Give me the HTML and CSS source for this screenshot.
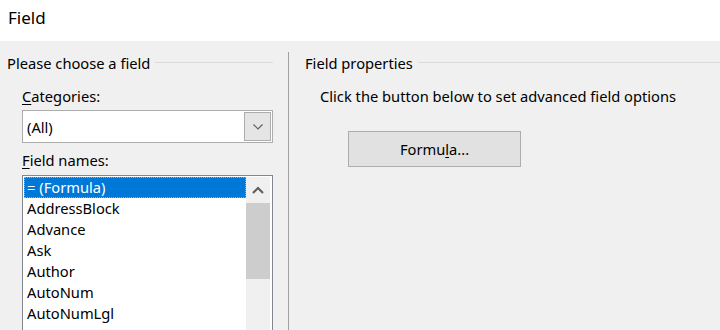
FILE: index.html
```html
<!DOCTYPE html>
<html lang="en">
<head>
  <meta charset="UTF-8" />
  <title>Field</title>
  <link rel="stylesheet" href="styles.css">
</head>
<body>

<!-- Title bar -->
<div class="titlebar">Field</div>

<div class="dialog">
  <!-- Left: choose a field -->
  <div class="pane pane-left">
    <div class="legend"><span>Please choose a field</span></div>
    <div class="pane-body">
      <div class="label"><u>C</u>ategories:</div>
      <div class="combo">
        <div class="combo-text">(All)</div>
        <div class="combo-btn">
          <svg width="10" height="6" viewBox="0 0 10 6"><path d="M0.5 0.5 L5 5 L9.5 0.5" fill="none" stroke="#606060" stroke-width="1.2"/></svg>
        </div>
      </div>

      <div class="label label-names"><u>F</u>ield names:</div>
      <div class="listbox">
        <div class="items">
          <div class="item selected">= (Formula)</div>
          <div class="item">AddressBlock</div>
          <div class="item">Advance</div>
          <div class="item">Ask</div>
          <div class="item">Author</div>
          <div class="item">AutoNum</div>
          <div class="item">AutoNumLgl</div>
        </div>
        <div class="scrollbar">
          <div class="scroll-up">
            <svg width="12" height="8" viewBox="0 0 12 8"><path d="M1 7 L6 2 L11 7" fill="none" stroke="#606060" stroke-width="2.2"/></svg>
          </div>
          <div class="thumb"></div>
        </div>
      </div>
    </div>
  </div>

  <div class="divider"></div>

  <!-- Right: field properties -->
  <div class="pane pane-right">
    <div class="legend"><span>Field properties</span></div>
    <div class="hint">Click the button below to set advanced field options</div>
    <button class="btn">Formu<u>l</u>a...</button>
  </div>
</div>

</body>
</html>
```

FILE: styles.css
```css
* {
  margin: 0;
  padding: 0;
  box-sizing: border-box;
}
html, body {
  height: 100%;
  overflow: hidden;
}
body {
  font-family: 'Noto Sans', 'Segoe UI', sans-serif;
  font-size: 14.7px;
  color: #000;
  background: #f0f0f0;
}
u {
  text-decoration-thickness: 1px;
  text-underline-offset: 2px;
}

.titlebar {
  height: 41px;
  background: #fff;
  padding: 6px 0 0 8px;
  font-size: 17px;
  line-height: 24px;
}

.dialog {
  display: flex;
  height: 289px;
  padding-top: 11px;
  overflow: hidden;
}

/* group legend with line after */
.legend {
  display: flex;
  align-items: center;
  height: 22px;
  line-height: 22px;
}
.legend::after {
  content: "";
  flex: 1;
  height: 1px;
  background: #dcdcdc;
  margin-left: 5px;
  margin-top: -2px;
}

.pane-left {
  width: 266px;
  margin-left: 7px;
  margin-right: 15px;
}
.pane-body {
  padding-left: 15px;
}
.label {
  margin-top: 11px;
  line-height: 22px;
  height: 22px;
}
.label-names {
  margin-top: 6px;
}

.combo {
  display: flex;
  height: 33px;
  margin-top: 3px;
  background: #fff;
  border: 1px solid #adadad;
  padding: 1px 1px 1px 4px;
}
.combo-text {
  flex: 1;
  line-height: 31px;
}
.combo-btn {
  width: 27px;
  background: #e5e5e5;
  border: 1px solid #adadad;
  display: flex;
  align-items: center;
  justify-content: center;
}

.listbox {
  display: flex;
  margin-top: 4px;
  height: 200px;
  background: #fff;
  border: 1px solid #828790;
  padding: 1px;
}
.items {
  flex: 1;
}
.item {
  height: 21px;
  line-height: 21px;
  padding-left: 3px;
}
.item.selected {
  background: #0078d7;
  color: #fff;
  outline: 1px dotted #ff9c00;
  outline-offset: -1px;
}
.scrollbar {
  width: 24px;
  margin-right: 1px;
  background: #f0f0f0;
}
.scroll-up {
  height: 26px;
  display: flex;
  align-items: center;
  justify-content: center;
}
.thumb {
  height: 76px;
  background: #cdcdcd;
}

.divider {
  width: 1px;
  background: #a0a0a0;
}

.pane-right {
  flex: 1;
  padding-left: 16px;
}
.hint {
  margin: 11px 0 0 15px;
  line-height: 22px;
}
.btn {
  display: block;
  margin: 24px 0 0 43px;
  width: 173px;
  height: 36px;
  font: inherit;
  background: #e1e1e1;
  border: 1px solid #adadad;
  color: #000;
}
```
